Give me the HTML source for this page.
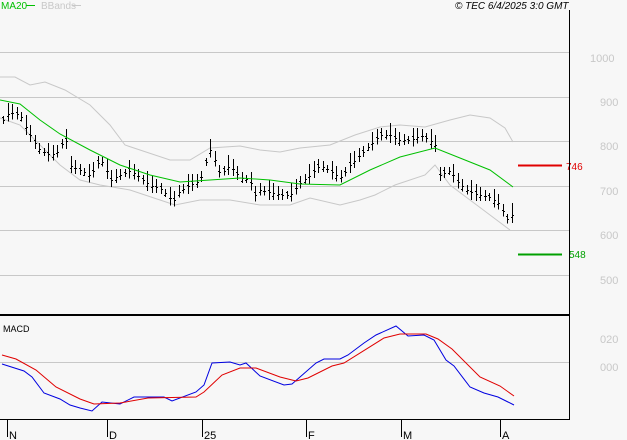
<!DOCTYPE html>
<html><head><meta charset="utf-8"><style>
html,body{margin:0;padding:0;background:#f7f7f7;}
svg{display:block;font-family:"Liberation Sans",sans-serif;}
</style></head><body>
<svg id="s" width="627" height="440" viewBox="0 0 627 440" xmlns="http://www.w3.org/2000/svg">
<rect width="627" height="440" fill="#f7f7f7"/>
<g stroke="#c8c8c8" stroke-width="1">
<line x1="0" y1="52.5" x2="569" y2="52.5"/>
<line x1="0" y1="97.5" x2="569" y2="97.5"/>
<line x1="0" y1="141.5" x2="569" y2="141.5"/>
<line x1="0" y1="186.5" x2="569" y2="186.5"/>
<line x1="0" y1="230.5" x2="569" y2="230.5"/>
<line x1="0" y1="275.5" x2="569" y2="275.5"/>
<line x1="0" y1="362.5" x2="569" y2="362.5"/>
</g>
<g fill="#c8c8c8" font-size="11">
<text x="590" y="62">1000</text>
<text x="600" y="106">900</text>
<text x="600" y="150">800</text>
<text x="600" y="195">700</text>
<text x="600" y="239">600</text>
<text x="600" y="284">500</text>
<text x="600" y="343">020</text>
<text x="600" y="371">000</text>
</g>
<polyline fill="none" stroke="#c8c8c8" points="0,77 15,77 30,85 45,82 65,90 90,105 110,125 125,145 140,150 170,160 190,160 210,148 240,146 260,150 280,152 300,148 330,145 355,135 380,127 400,125 425,127 450,120 470,115 490,118 505,128 513,142"/>
<polyline fill="none" stroke="#c8c8c8" points="0,118 20,125 40,145 60,165 80,180 100,185 130,190 160,200 175,205 200,200 230,200 260,205 290,205 310,198 340,205 360,200 375,195 395,185 425,175 435,165 450,185 470,200 490,215 510,230"/>
<g id="bars" stroke="#000" stroke-width="1"></g>
<polyline fill="none" stroke="#00c000" points="0,100 20,104 40,120 60,134 90,150 120,165 150,175 180,182 210,180 240,178 270,180 300,184 340,185 370,170 400,157 435,148 460,158 490,170 513,187"/>
<line x1="518" y1="165.5" x2="562" y2="165.5" stroke="#e00000" stroke-width="2"/>
<text x="566" y="170" fill="#e00000" font-size="10">746</text>
<line x1="518" y1="254.5" x2="562" y2="254.5" stroke="#00a000" stroke-width="2"/>
<text x="569" y="258" fill="#00a000" font-size="10">548</text>
<polyline fill="none" stroke="#0000e0" points="2,364 24,371 32,377 44,393 60,399 70,405 80,408 92,411 102,402 120,404 134,397 164,397 172,401 196,392 204,385 212,363 230,362 240,365 246,363 260,376 284,385 292,384 316,363 324,359 340,359 348,355 364,343 376,335 396,326 408,336 424,335 434,340 446,360 454,366 470,387 484,393 498,397 508,402 514,405"/>
<polyline fill="none" stroke="#e00000" points="2,355 16,359 36,370 56,387 80,399 94,404 120,403 148,398 196,397 204,392 222,375 240,368 256,368 280,377 296,381 308,378 332,366 344,363 384,338 400,334 426,334 438,339 452,349 480,377 500,386 514,396"/>
<line x1="0" y1="315" x2="569" y2="315" stroke="#000" stroke-width="2"/>
<line x1="569.5" y1="10" x2="569.5" y2="420" stroke="#000"/>
<line x1="0" y1="419.5" x2="570" y2="419.5" stroke="#000"/>
<g stroke="#000">
<line x1="7.5" y1="420" x2="7.5" y2="437"/><line x1="107.5" y1="420" x2="107.5" y2="437"/>
<line x1="202.5" y1="420" x2="202.5" y2="437"/><line x1="306.5" y1="420" x2="306.5" y2="437"/>
<line x1="401.5" y1="420" x2="401.5" y2="437"/><line x1="500.5" y1="420" x2="500.5" y2="437"/>
</g>
<g font-size="11" fill="#000">
<text x="9" y="439">N</text><text x="109" y="439">D</text><text x="204" y="439">25</text>
<text x="308" y="439">F</text><text x="403" y="439">M</text><text x="502" y="439">A</text>
<text x="3" y="332" font-size="9">MACD</text>
</g>
<text x="1" y="9" font-size="10" fill="#00c000">MA20</text>
<line x1="26" y1="5.5" x2="35" y2="5.5" stroke="#00c000"/>
<text x="41" y="9" font-size="10" fill="#c8c8c8">BBands</text>
<line x1="72" y1="5.5" x2="81" y2="5.5" stroke="#c8c8c8"/>
<text x="455" y="9" font-size="10" font-style="italic" fill="#000">© TEC 6/4/2025 3:0 GMT</text>
</svg>
<script>
var c=[[3,120],[10,112],[20,115],[30,135],[40,150],[50,155],[60,150],[65,135],[70,165],[80,170],[90,175],[100,160],[105,165],[110,180],[120,175],[130,170],[140,178],[150,185],[160,188],[170,198],[175,200],[180,190],[190,185],[200,180],[205,165],[210,150],[215,160],[220,175],[230,165],[240,178],[250,180],[255,195],[260,190],[270,192],[280,195],[290,195],[300,183],[310,175],[320,165],[330,170],[340,178],[350,165],[360,155],[370,145],[380,135],[390,135],[400,140],[410,140],[420,135],[430,140],[435,145],[440,175],[450,170],[460,185],[470,192],[480,195],[490,197],[500,205],[505,215],[510,225],[513,210]];
function at(x){for(var i=0;i<c.length-1;i++){if(x>=c[i][0]&&x<=c[i+1][0]){var t=(x-c[i][0])/(c[i+1][0]-c[i][0]);return c[i][1]+t*(c[i+1][1]-c[i][1]);}}return c[c.length-1][1];}
var g=document.getElementById('bars'),s='';
for(var k=0;;k++){var x=Math.round(3+k*4.5);if(x>513)break;var y=Math.round(at(x)),h=4+((k*7)%9),o=((k*5)%7)-3;
s+='<line x1="'+(x+.5)+'" y1="'+(y-h)+'" x2="'+(x+.5)+'" y2="'+(y+h/2+2)+'"/>';
s+='<line x1="'+(x-1)+'" y1="'+(y+o+.5)+'" x2="'+x+'" y2="'+(y+o+.5)+'"/>';
s+='<line x1="'+(x+1)+'" y1="'+(y+.5)+'" x2="'+(x+2)+'" y2="'+(y+.5)+'"/>';}
g.innerHTML=s;
</script>
</body></html>
